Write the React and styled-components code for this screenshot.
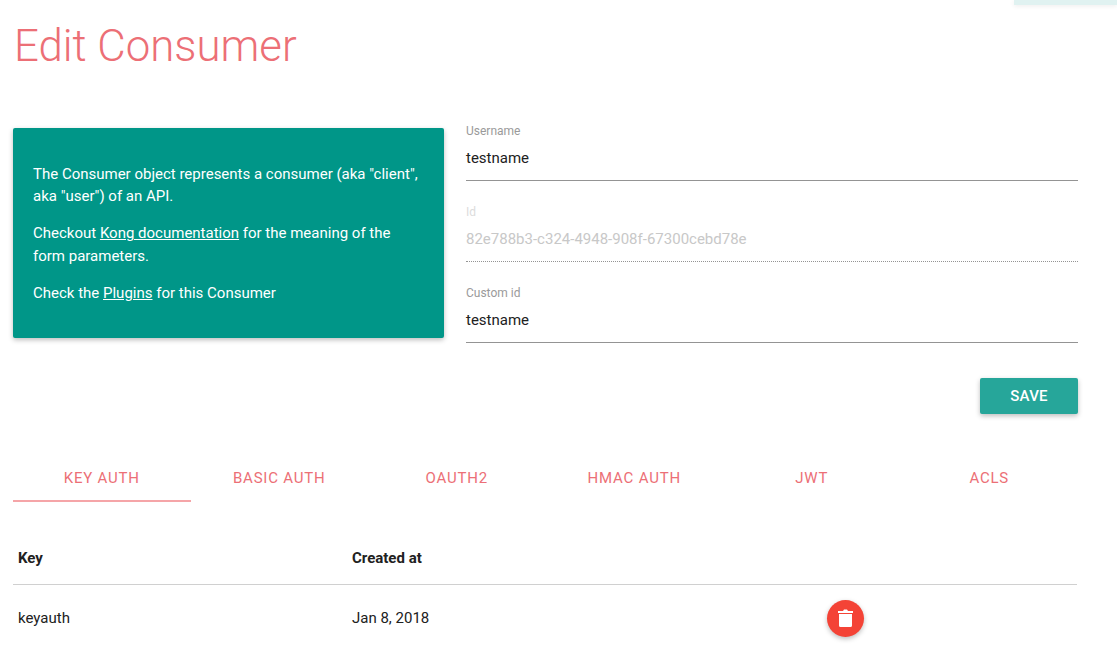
import React from "react";
import styled, { createGlobalStyle } from "styled-components";

const GlobalStyle = createGlobalStyle`
    html, body {
        margin: 0;
        padding: 0;
        background: #fff;
        font-family: Roboto, "Liberation Sans", sans-serif;
        color: #212121;
    }
    * { box-sizing: border-box; }
`;

const Page = styled.div`
    position: relative;
    width: 1117px;
    height: 652px;
    overflow: hidden;
    padding: 0 39px 0 13px;
`;

const TopTab = styled.div`
    position: absolute;
    top: 0;
    right: 0;
    width: 103px;
    height: 5px;
    background: #e0f2f1;
    box-shadow: 0 1px 5px rgba(0, 0, 0, 0.08);
`;

const Title = styled.h1`
    margin: 0;
    height: 128px;
    padding: 18px 0 0 1px;
    font-size: 43.75px;
    line-height: 56px;
    font-weight: 300;
    color: #ec6f76;
`;

const TopRow = styled.div`
    display: flex;
    align-items: flex-start;
    gap: 22px;
`;

const InfoCard = styled.div`
    flex: 0 0 431px;
    height: 210px;
    padding: 34.5px 20px 0 20px;
    background: #009688;
    color: #fff;
    border-radius: 2px;
    box-shadow: 0 2px 5px rgba(0, 0, 0, 0.26);
    font-size: 15px;
    line-height: 22.5px;

    p {
        margin: 0 0 14.5px;
    }
    a {
        color: #fff;
        text-decoration: underline;
    }
`;

const Form = styled.div`
    flex: 1;
    display: flex;
    flex-direction: column;
`;

const Field = styled.div`
    height: 81px;
    margin-top: -4px;
    margin-bottom: 4px;
`;

const FieldLabel = styled.div`
    font-size: 12px;
    line-height: 14px;
    color: ${(props) => (props.$disabled ? "#dcdcdc" : "#9a9a9a")};
`;

const FieldValue = styled.div`
    height: 43px;
    padding-top: 10px;
    font-size: 15px;
    line-height: 20px;
    color: ${(props) => (props.$disabled ? "#c8c8c8" : "#212121")};
    border-bottom: 1px ${(props) => (props.$disabled ? "dotted" : "solid")} #949494;
`;

const Actions = styled.div`
    display: flex;
    justify-content: flex-end;
    margin-top: 7px;
`;

const SaveButton = styled.button`
    width: 98px;
    height: 36px;
    border: 0;
    border-radius: 2px;
    background: #26a69a;
    color: #fff;
    font-family: inherit;
    font-size: 15px;
    font-weight: 500;
    letter-spacing: 0.2px;
    box-shadow: 0 2px 5px rgba(0, 0, 0, 0.26);
`;

const Tabs = styled.div`
    display: grid;
    grid-template-columns: repeat(6, 1fr);
    margin-top: 40px;
`;

const Tab = styled.div`
    height: 48px;
    padding-top: 14px;
    text-align: center;
    font-size: 15px;
    line-height: 20px;
    letter-spacing: 0.8px;
    color: #ec6f76;
    border-bottom: 2px solid ${(props) => (props.$active ? "#f5a5a8" : "transparent")};
`;

const Table = styled.table`
    width: calc(100% - 1px);
    margin-top: 31px;
    border-collapse: collapse;
    table-layout: fixed;
    font-size: 15px;

    th {
        height: 51px;
        padding: 0 5px;
        text-align: left;
        font-weight: 700;
        font-size: 15px;
        border-bottom: 1px solid #d0d0d0;
    }
    td {
        height: 68px;
        padding: 0 5px;
    }
`;

const DeleteButton = styled.button`
    display: flex;
    align-items: center;
    justify-content: center;
    width: 37px;
    height: 37px;
    padding: 0;
    border: 0;
    border-radius: 50%;
    background: #f44336;
    box-shadow: 0 2px 5px rgba(0, 0, 0, 0.26);
`;

const TrashIcon = () => (
    <svg width="15" height="18" viewBox="0 0 15 18" fill="#fff">
        <path d="M0 2h5l1-1.5h3l1 1.5h5v2H0z" />
        <path d="M1 5h13v11.5a1.5 1.5 0 0 1-1.5 1.5h-10A1.5 1.5 0 0 1 1 16.5z" />
    </svg>
);

const tabs = ["KEY AUTH", "BASIC AUTH", "OAUTH2", "HMAC AUTH", "JWT", "ACLS"];

export default function App() {
    return (
        <Page>
            <GlobalStyle />
            <TopTab />
            <Title>Edit Consumer</Title>
            <TopRow>
                <InfoCard>
                    <p>The Consumer object represents a consumer (aka "client", aka "user") of an API.</p>
                    <p>
                        Checkout <a href="#kong">Kong documentation</a> for the meaning of the form parameters.
                    </p>
                    <p>
                        Check the <a href="#plugins">Plugins</a> for this Consumer
                    </p>
                </InfoCard>
                <Form>
                    <Field>
                        <FieldLabel>Username</FieldLabel>
                        <FieldValue>testname</FieldValue>
                    </Field>
                    <Field>
                        <FieldLabel $disabled>Id</FieldLabel>
                        <FieldValue $disabled>82e788b3-c324-4948-908f-67300cebd78e</FieldValue>
                    </Field>
                    <Field>
                        <FieldLabel>Custom id</FieldLabel>
                        <FieldValue>testname</FieldValue>
                    </Field>
                    <Actions>
                        <SaveButton>SAVE</SaveButton>
                    </Actions>
                </Form>
            </TopRow>
            <Tabs>
                {tabs.map((tab, i) => (
                    <Tab key={tab} $active={i === 0}>{tab}</Tab>
                ))}
            </Tabs>
            <Table>
                <colgroup>
                    <col style={{ width: 334 }} />
                    <col style={{ width: 475 }} />
                    <col />
                </colgroup>
                <thead>
                    <tr>
                        <th>Key</th>
                        <th>Created at</th>
                        <th></th>
                    </tr>
                </thead>
                <tbody>
                    <tr>
                        <td>keyauth</td>
                        <td>Jan 8, 2018</td>
                        <td>
                            <DeleteButton><TrashIcon /></DeleteButton>
                        </td>
                    </tr>
                </tbody>
            </Table>
        </Page>
    );
}
